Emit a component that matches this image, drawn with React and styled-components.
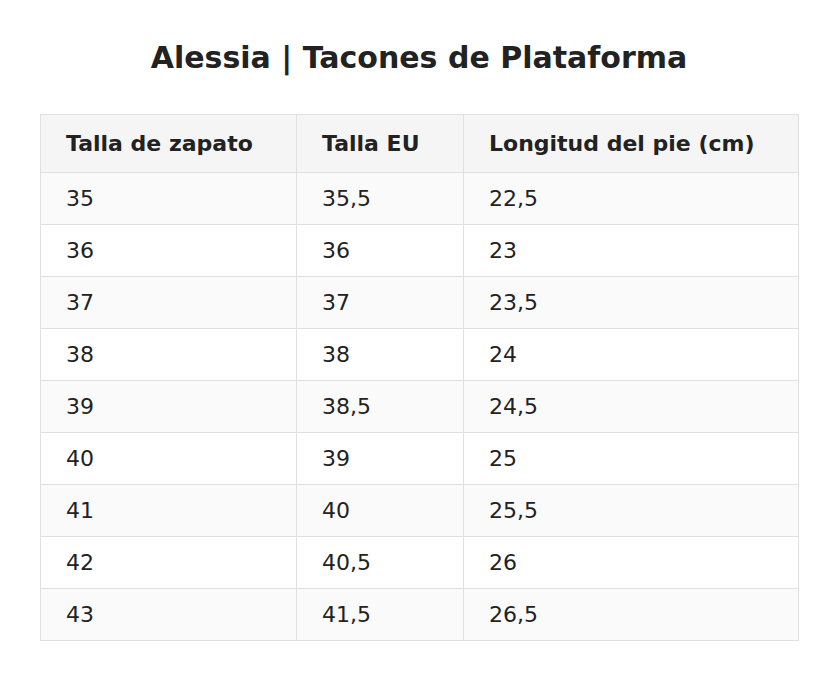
import React from "react";
import styled, { createGlobalStyle } from "styled-components";

const Global = createGlobalStyle`
  html, body { margin: 0; padding: 0; background: #ffffff; }
  body { font-family: "DejaVu Sans", Verdana, sans-serif; color: #222222; }
`;

const Page = styled.div`
  padding: 40px 40px;
`;

const Title = styled.h1`
  margin: 0 0 38px;
  text-align: center;
  font-size: 30px;
  line-height: 36px;
  font-weight: bold;
  color: #222222;
`;

const Table = styled.table`
  width: 100%;
  border-collapse: collapse;
  table-layout: fixed;
  font-family: "DejaVu Sans", Verdana, sans-serif;
  font-size: 22px;
`;

const HeadCell = styled.th`
  box-sizing: border-box;
  text-align: left;
  font-weight: bold;
  font-size: 22px;
  background: #f5f5f5;
  border: 1px solid #e0e0e0;
  padding: 0 25px;
  height: 58px;
  line-height: 26px;
  width: ${(p) => p.$w}px;
  color: #222222;
`;

const Row = styled.tr`
  background: ${(p) => (p.$odd ? "#fafafa" : "#ffffff")};
`;

const Cell = styled.td`
  box-sizing: border-box;
  border: 1px solid #e0e0e0;
  padding: 0 25px;
  height: 52px;
  font-size: 22px;
  line-height: 26px;
  color: #222222;
`;

const rows = [
  ["35", "35,5", "22,5"],
  ["36", "36", "23"],
  ["37", "37", "23,5"],
  ["38", "38", "24"],
  ["39", "38,5", "24,5"],
  ["40", "39", "25"],
  ["41", "40", "25,5"],
  ["42", "40,5", "26"],
  ["43", "41,5", "26,5"],
];

export default function App() {
  return (
    <Page>
      <Global />
      <Title>Alessia | Tacones de Plataforma</Title>
      <Table>
        <thead>
          <tr>
            <HeadCell $w={256}>Talla de zapato</HeadCell>
            <HeadCell $w={167}>Talla EU</HeadCell>
            <HeadCell $w={335}>Longitud del pie (cm)</HeadCell>
          </tr>
        </thead>
        <tbody>
          {rows.map((r, i) => (
            <Row key={i} $odd={i % 2 === 0}>
              {r.map((c, j) => (
                <Cell key={j}>{c}</Cell>
              ))}
            </Row>
          ))}
        </tbody>
      </Table>
    </Page>
  );
}
